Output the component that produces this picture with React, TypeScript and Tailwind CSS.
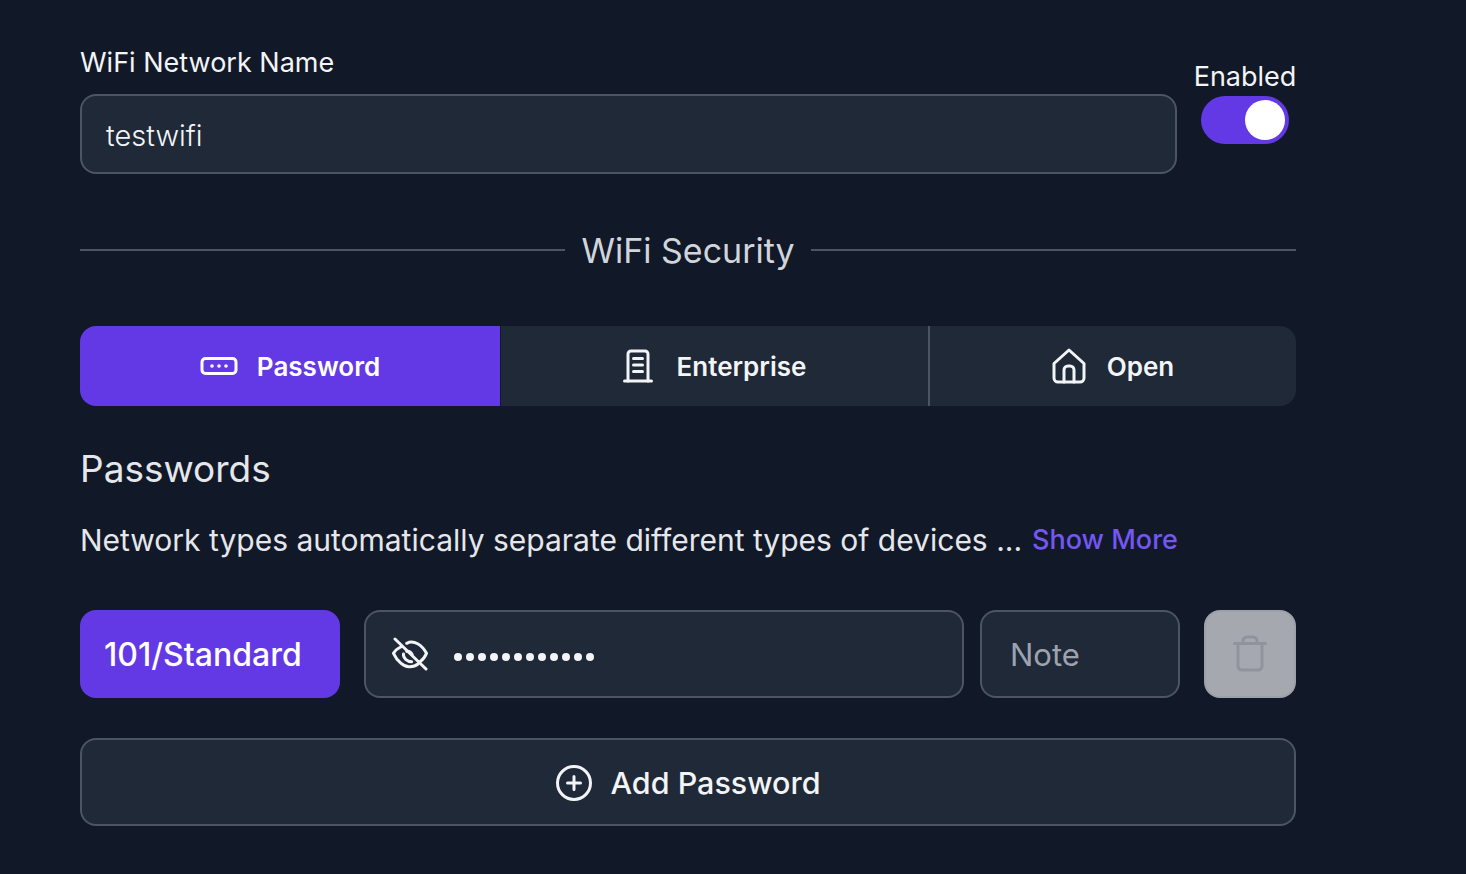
import { ReactNode } from "react";

function DotsIcon() {
  return (
    <svg width="38" height="20" viewBox="0 0 38 20" fill="none" stroke="currentColor" strokeWidth="3">
      <rect x="2" y="2.500" width="34" height="15" rx="3.500" />
      <circle cx="12" cy="10" r="1.800" fill="currentColor" stroke="none" />
      <circle cx="19" cy="10" r="1.800" fill="currentColor" stroke="none" />
      <circle cx="26" cy="10" r="1.800" fill="currentColor" stroke="none" />
    </svg>
  );
}

function BuildingIcon() {
  return (
    <svg width="30" height="34" viewBox="0 0 30 34" fill="none" stroke="currentColor" strokeWidth="3" strokeLinecap="round" strokeLinejoin="round">
      <path d="M5 32V5a3 3 0 0 1 3-3h14a3 3 0 0 1 3 3v27" />
      <path d="M1.500 32h27" />
      <path d="M10.500 9.500h9M10.500 16h9M10.500 22.500h9" />
    </svg>
  );
}

function HomeIcon() {
  return (
    <svg width="34" height="36" viewBox="0 0 34 36" fill="none" stroke="currentColor" strokeWidth="3" strokeLinecap="round" strokeLinejoin="round">
      <path d="M2 15.500 17 2l15 13.500V30a4 4 0 0 1-4 4H6a4 4 0 0 1-4-4z" />
      <path d="M12 34V22a4 4 0 0 1 4-4h2a4 4 0 0 1 4 4v12" />
    </svg>
  );
}

function EyeOffIcon() {
  return (
    <svg width="36" height="34" viewBox="0 0 36 34" fill="none" stroke="currentColor" strokeWidth="3" strokeLinecap="round" strokeLinejoin="round">
      <path d="M3 2l31 30" />
      <path d="M14.700 6.300C22 2.500 30 8 34.500 16.300c-1.500 3.500-3.700 6.500-6.500 8.400" />
      <path d="M8.700 10C5.500 11.500 3 13.500 1.500 16.300 5 24 12 30.500 18 29.700c3 0 6-1 8-2.700" />
      <path d="M11.500 17c-.5 4 3.500 7.500 8.200 7.700" />
      <path d="M14.700 14.500c2-.5 4 .5 5.500 3" />
    </svg>
  );
}

function TrashIcon() {
  return (
    <svg width="34" height="38" viewBox="0 0 34 38" fill="none" stroke="currentColor" strokeWidth="3" strokeLinecap="round" strokeLinejoin="round">
      <path d="M1.500 8.500h31" />
      <path d="M5 8.500V31a4 4 0 0 0 4 4h16a4 4 0 0 0 4-4V8.500" />
      <path d="M10 8V6a4 4 0 0 1 4-4h6a4 4 0 0 1 4 4v2" />
    </svg>
  );
}

function PlusCircleIcon() {
  return (
    <svg width="38" height="38" viewBox="0 0 38 38" fill="none" stroke="currentColor" strokeWidth="3" strokeLinecap="round">
      <circle cx="19" cy="19" r="16.500" />
      <path d="M19 12.500v13M12.500 19h13" />
    </svg>
  );
}

function Tab({ icon, label, active, className }: { icon: ReactNode; label: string; active?: boolean; className: string }) {
  return (
    <button
      type="button"
      className={`flex items-center justify-center text-[26px] font-semibold ${active ? "bg-[#6339e6] text-white" : "bg-[#1f2937] text-[#f3f4f6]"} ${className}`}
    >
      {icon}
      <span className="mt-[1px]">{label}</span>
    </button>
  );
}

export default function App() {
  return (
    <div className="min-h-[874px] bg-[#111827] pl-[80px] pt-[45px] font-['Inter',sans-serif] text-[#f3f4f6]">
      <div className="w-[1216px]">
        <div className="flex items-start">
          <div className="w-[1097px]">
            <div className="text-[27px] leading-[36px] mb-[13px]">WiFi Network Name</div>
            <div className="h-[80px] rounded-[16px] border-2 border-[#4b5563] bg-[#1f2937] pl-[24px] pt-[3px] flex items-center text-[29px] font-light">
              testwifi
            </div>
          </div>
          <div className="ml-[17px] w-[102px] pt-[14px] flex flex-col items-center">
            <div className="text-[27px] leading-[36px] mb-[1px]">Enabled</div>
            <div className="w-[88px] h-[48px] rounded-full bg-[#6339e6] flex items-center justify-end pr-[4px]">
              <div className="w-[40px] h-[40px] rounded-full bg-white" />
            </div>
          </div>
        </div>

        <div className="flex items-center gap-[16px] mt-[56px] h-[40px]">
          <div className="flex-1 h-[2px] bg-[#4b5563]" />
          <div className="text-[34px] leading-[40px] pt-[1px] text-[#d1d5db]">WiFi Security</div>
          <div className="flex-1 h-[2px] bg-[#4b5563]" />
        </div>

        <div className="flex mt-[56px] h-[80px] rounded-[16px] overflow-hidden">
          <Tab active className="w-[420px] gap-[19px]" icon={<DotsIcon />} label="Password" />
          <Tab className="w-[429px] ml-[1px] gap-[24px] border-r-2 border-[#4b5563]" icon={<BuildingIcon />} label="Enterprise" />
          <Tab className="flex-1 gap-[21px]" icon={<HomeIcon />} label="Open" />
        </div>

        <div className="text-[37px] leading-[48px] mt-[39px] text-[#e5e7eb]">Passwords</div>

        <div className="flex items-center mt-[25px] h-[44px] text-[30px] text-[#e5e7eb]">
          Network types automatically separate different types of devices ...
          <span className="ml-[10px] text-[27px] font-medium text-[#7357f0]">Show More</span>
        </div>

        <div className="flex mt-[48px] h-[88px]">
          <div className="w-[260px] rounded-[16px] bg-[#6339e6] text-white text-[32px] font-medium flex items-center pl-[24px] pt-[2px]">
            101/Standard
          </div>
          <div className="ml-[24px] w-[600px] rounded-[16px] border-2 border-[#4b5563] bg-[#1f2937] flex items-center pl-[26px]">
            <EyeOffIcon />
            <div className="ml-[26px] mt-[6px] flex gap-[4px]">
              {Array.from({ length: 12 }).map((_, i) => (
                <span key={i} className="w-[8px] h-[8px] rounded-full bg-[#f3f4f6]" />
              ))}
            </div>
          </div>
          <div className="ml-[16px] w-[200px] rounded-[16px] border-2 border-[#4b5563] bg-[#1f2937] flex items-center pl-[28px] pt-[2px] text-[31px] text-[#9ca3af]">
            Note
          </div>
          <div className="ml-[24px] w-[92px] rounded-[16px] border-2 border-[#9ca0a9] bg-[#a6a8b0] text-[#8f939c] flex items-center justify-center">
            <TrashIcon />
          </div>
        </div>

        <button
          type="button"
          className="mt-[40px] w-full h-[88px] rounded-[16px] border-2 border-[#4b5563] bg-[#1f2937] flex items-center justify-center gap-[17px] pt-[1px] text-[30.5px] font-medium"
        >
          <PlusCircleIcon />
          Add Password
        </button>
      </div>
    </div>
  );
}
